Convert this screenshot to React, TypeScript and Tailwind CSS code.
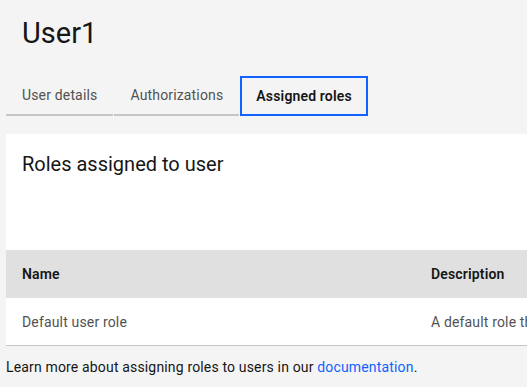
export default function App() {
  const tabs = [
    { label: 'User details', selected: false },
    { label: 'Authorizations', selected: false },
    { label: 'Assigned roles', selected: true },
  ]

  return (
    <div className="min-h-screen overflow-hidden bg-[#f4f4f4] font-['Roboto',sans-serif] text-[#161616]">
      <div className="pl-[6px]">
        {/* page title */}
        <h1 className="pl-4 pt-[15px] text-[29px] leading-9 font-normal">User1</h1>

        {/* tabs */}
        <div className="mt-[25px] flex">
          {tabs.map((t, i) => (
            <div
              key={t.label}
              className={
                t.selected
                  ? 'flex h-10 items-center border-2 border-[#0f62fe] px-[14px] text-sm tracking-[0.16px] font-semibold text-[#161616] ' + (i > 0 ? 'ml-px' : '')
                  : 'flex h-10 items-center border-b-2 border-[#c6c6c6] px-4 text-sm tracking-[0.16px] text-[#525252] ' + (i > 0 ? 'ml-px' : '')
              }
            >
              {t.label}
            </div>
          ))}
        </div>

        {/* tab panel */}
        <div className="mt-[18px] w-[900px] bg-white">
          <div className="px-4 pt-4 pb-6">
            <h2 className="text-xl leading-7 font-normal">Roles assigned to user</h2>
          </div>
          <div className="h-12" />
          <div className="grid h-12 grid-cols-[409px_1fr] items-center bg-[#e0e0e0] text-sm tracking-[0.16px] font-semibold">
            <div className="px-4">Name</div>
            <div className="px-4">Description</div>
          </div>
          <div className="grid h-12 grid-cols-[409px_1fr] items-center border-b border-[#c6c6c6] text-sm tracking-[0.16px] text-[#525252]">
            <div className="px-4">Default user role</div>
            <div className="px-4">A default role that is assigned to every user</div>
          </div>
        </div>

        <p className="pt-[11px] text-sm leading-5 tracking-[0.16px]">
          Learn more about assigning roles to users in our{' '}
          <a href="#" className="text-[#0f62fe]">documentation</a>.
        </p>
      </div>
    </div>
  )
}
